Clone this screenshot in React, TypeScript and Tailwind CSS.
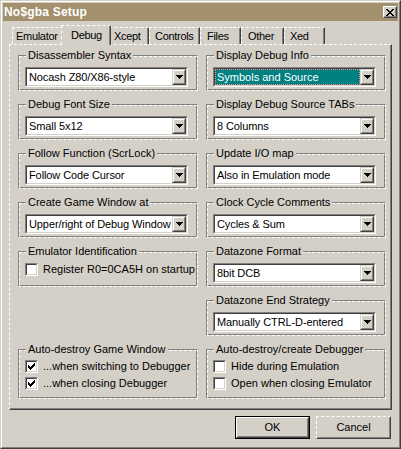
import type { ReactNode } from "react";

const tabs = [
  { label: "Emulator", w: "w-[51px]", pl: "pl-[3px]" },
  { label: "Debug", w: "w-[50px]", pl: "pl-[9px]", active: true },
  { label: "Xcept", w: "w-[40px]", pl: "pl-[4px]" },
  { label: "Controls", w: "w-[51px]", pl: "pl-[5px]" },
  { label: "Files", w: "w-[41px]", pl: "pl-[6px]" },
  { label: "Other", w: "w-[43px]", pl: "pl-[6px]" },
  { label: "Xed", w: "w-[41px]", pl: "pl-[5px]" },
];

function Group({ title, tall, children }: { title: string; tall?: boolean; children?: ReactNode }) {
  return (
    <div
      className={`relative border border-t-[#808080] border-l-[#808080] border-r-white border-b-white [border-right-style:dashed] [border-bottom-style:dashed] ${
        tall ? "h-[50px]" : "h-[36px]"
      }`}
    >
      <div
        className={`h-full border border-t-white border-l-white border-r-[#808080] border-b-[#808080] [border-top-style:dashed] [border-left-style:dashed] pl-[5px] ${
          tall ? "pt-[9px]" : "pt-[10px]"
        }`}
      >
        {children}
      </div>
      <span className="absolute -top-[7px] left-[7px] bg-[#d4d0c8] px-[2px] leading-[13px] whitespace-nowrap">
        {title}
      </span>
    </div>
  );
}

function Combo({ value, selected }: { value: string; selected?: boolean }) {
  return (
    <div className="flex h-[20px] w-[163px] border border-t-[#808080] border-l-[#808080] border-r-white border-b-white">
      <div className="flex flex-1 border border-t-[#404040] border-l-[#404040] border-r-[#d4d0c8] border-b-[#d4d0c8] bg-white">
        {selected ? (
          <div className="flex flex-1 items-center overflow-hidden whitespace-nowrap border border-dotted border-[#ff8c8c] bg-[#008080] pl-[1px] leading-[14px] text-white">
            {value}
          </div>
        ) : (
          <div className="flex flex-1 items-center overflow-hidden whitespace-nowrap pl-[2px] leading-[16px] tracking-[-0.1px]">
            {value}
          </div>
        )}
        <div className="w-[14px] border border-t-[#d4d0c8] border-l-[#d4d0c8] border-r-[#404040] border-b-[#404040]">
          <div className="flex h-full items-center justify-center border border-t-white border-l-white border-r-[#808080] border-b-[#808080] bg-[#d4d0c8]">
            <svg width="7" height="4" viewBox="0 0 7 4" shapeRendering="crispEdges">
              <path d="M0 0h7v1h-7zM1 1h5v1h-5zM2 2h3v1h-3zM3 3h1v1h-1z" fill="#000" />
            </svg>
          </div>
        </div>
      </div>
    </div>
  );
}

function CheckBox({ label, checked }: { label: string; checked?: boolean }) {
  return (
    <div className="flex h-[13px] items-center">
      <span className="h-[13px] w-[13px] shrink-0 border border-t-[#808080] border-l-[#808080] border-r-white border-b-white">
        <span className="block h-full border border-t-[#404040] border-l-[#404040] border-r-[#d4d0c8] border-b-[#d4d0c8] bg-white p-[1px]">
          {checked && (
            <svg width="7" height="7" viewBox="0 0 7 7" shapeRendering="crispEdges" className="block">
              <path
                d="M6 0h1v1h-1zM5 1h2v1h-2zM0 2h1v1h-1zM4 2h3v1h-3zM0 3h2v1h-2zM3 3h3v1h-3zM0 4h5v1h-5zM1 5h3v1h-3zM2 6h1v1h-1z"
                fill="#000"
              />
            </svg>
          )}
        </span>
      </span>
      <span className="ml-[5px] whitespace-nowrap leading-[13px]">{label}</span>
    </div>
  );
}

function Button({ label, isDefault }: { label: string; isDefault?: boolean }) {
  if (isDefault) {
    return (
      <div className="h-[23px] w-[75px] border border-black">
        <div className="h-full border border-t-white border-l-white border-r-[#404040] border-b-[#404040]">
          <div className="flex h-full items-center justify-center border border-t-[#d4d0c8] border-l-[#d4d0c8] border-r-[#808080] border-b-[#808080]">
            {label}
          </div>
        </div>
      </div>
    );
  }
  return (
    <div className="h-[23px] w-[75px] border border-t-white border-l-white border-r-[#404040] border-b-[#404040] [border-top-style:dashed] [border-left-style:dashed]">
      <div className="flex h-full items-center justify-center border border-t-[#d4d0c8] border-l-[#d4d0c8] border-r-[#808080] border-b-[#808080]">
        {label}
      </div>
    </div>
  );
}

export default function App() {
  return (
    <div className="h-[449px] w-[401px] border border-t-[#d4d0c8] border-l-[#d4d0c8] border-r-[#404040] border-b-[#404040] bg-[#d4d0c8] font-['Liberation_Sans',Arial,sans-serif] text-[11px] text-black">
      <div className="h-full border border-t-white border-l-white border-r-[#808080] border-b-[#808080] p-[1px]">
        {/* Title bar */}
        <div className="flex h-[18px] items-center justify-between bg-[#a3916e] pl-[1px] pr-[1px]">
          <span className="text-[12px] font-bold leading-[18px] tracking-[0.2px] text-white">No$gba Setup</span>
          <div className="h-[12px] w-[14px] border border-t-white border-l-white border-r-[#404040] border-b-[#404040]">
            <div className="flex h-full items-center justify-center border border-t-[#d4d0c8] border-l-[#d4d0c8] border-r-[#808080] border-b-[#808080] bg-[#d4d0c8]">
              <svg width="8" height="7" viewBox="0 0 8 7" shapeRendering="crispEdges">
                <path
                  d="M0 0h2v1h-2zM6 0h2v1h-2zM1 1h2v1h-2zM5 1h2v1h-2zM2 2h4v1h-4zM3 3h2v1h-2zM2 4h4v1h-4zM1 5h2v1h-2zM5 5h2v1h-2zM0 6h2v1h-2zM6 6h2v1h-2z"
                  fill="#000"
                />
              </svg>
            </div>
          </div>
        </div>

        <div className="px-[6px]">
          {/* Tabs */}
          <div className="mt-[4px] flex h-[19px] items-end pl-[3px] tracking-[-0.3px]">
            {tabs.map((t) =>
              t.active ? (
                <div
                  key={t.label}
                  className={`relative z-10 -mx-[2px] -mb-px h-[20px] ${t.w} ${t.pl} border-t border-l border-r border-t-white border-l-white border-r-[#404040] [border-top-style:dashed] [border-left-style:dashed] bg-[#d4d0c8] pt-[3px] leading-[13px] shadow-[inset_-1px_0_0_#808080]`}
                >
                  {t.label}
                </div>
              ) : (
                <div
                  key={t.label}
                  className={`h-[17px] ${t.w} ${t.pl} border-t border-l border-r border-t-white border-l-white border-r-[#404040] [border-top-style:dashed] [border-left-style:dashed] pt-[2px] leading-[13px] shadow-[inset_-1px_0_0_#808080]`}
                >
                  {t.label}
                </div>
              )
            )}
          </div>

          {/* Tab page */}
          <div className="h-[366px] border border-t-white border-l-white border-r-[#404040] border-b-[#404040] [border-top-style:dashed] [border-left-style:dashed]">
            <div className="h-full border-r border-b border-r-[#808080] border-b-[#808080] pl-[8px] pt-[10px]">
              <div className="grid grid-cols-[180px_180px] gap-x-[8px] gap-y-[13px]">
                <Group title="Disassembler Syntax">
                  <Combo value="Nocash Z80/X86-style" />
                </Group>
                <Group title="Display Debug Info">
                  <Combo value="Symbols and Source" selected />
                </Group>

                <Group title="Debug Font Size">
                  <Combo value="Small 5x12" />
                </Group>
                <Group title="Display Debug Source TABs">
                  <Combo value="8 Columns" />
                </Group>

                <Group title="Follow Function (ScrLock)">
                  <Combo value="Follow Code Cursor" />
                </Group>
                <Group title="Update I/O map">
                  <Combo value="Also in Emulation mode" />
                </Group>

                <Group title="Create Game Window at">
                  <Combo value="Upper/right of Debug Window" />
                </Group>
                <Group title="Clock Cycle Comments">
                  <Combo value="Cycles & Sum" />
                </Group>

                <Group title="Emulator Identification">
                  <CheckBox label="Register R0=0CA5H on startup" />
                </Group>
                <Group title="Datazone Format">
                  <Combo value="8bit DCB" />
                </Group>

                <div />
                <Group title="Datazone End Strategy">
                  <Combo value="Manually CTRL-D-entered" />
                </Group>

                <Group title="Auto-destroy Game Window" tall>
                  <div className="flex flex-col gap-[4px]">
                    <CheckBox label="...when switching to Debugger" checked />
                    <CheckBox label="...when closing Debugger" checked />
                  </div>
                </Group>
                <Group title="Auto-destroy/create Debugger" tall>
                  <div className="flex flex-col gap-[4px]">
                    <CheckBox label="Hide during Emulation" />
                    <CheckBox label="Open when closing Emulator" />
                  </div>
                </Group>
              </div>
            </div>
          </div>

          {/* Buttons */}
          <div className="mt-[6px] flex justify-end gap-[6px] pr-px">
            <Button label="OK" isDefault />
            <Button label="Cancel" />
          </div>
        </div>
      </div>
    </div>
  );
}
